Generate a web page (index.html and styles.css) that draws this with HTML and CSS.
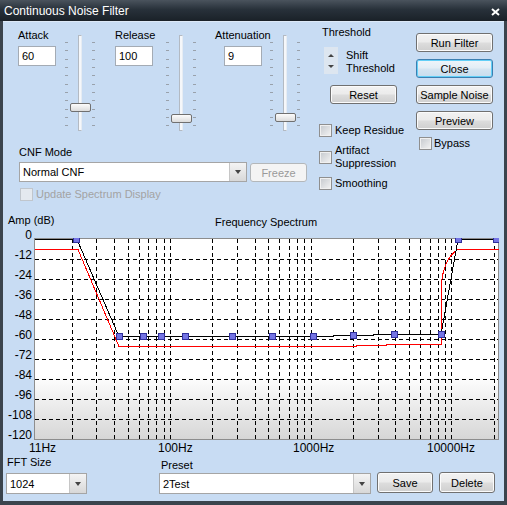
FILE: index.html
```html
<!DOCTYPE html>
<html lang="en">
<head>
  <meta charset="UTF-8">
  <title>Continuous Noise Filter</title>
  <link rel="stylesheet" href="styles.css">
</head>
<body>
  <div class="window">
    <div class="titlebar">
      <span class="title">Continuous Noise Filter</span>
      <svg class="close-x" width="9" height="8" viewBox="0 0 9 8"><path d="M1 1L8 7M8 1L1 7" stroke="#fff" stroke-width="2"/></svg>
    </div>

    <div class="client">
      <div class="top">
        <div class="left">
          <div class="sliders">
            <div class="param">
              <label>Attack</label>
              <input type="text" value="60">
            </div>
            <div class="slider">
              <span class="ticks"></span><span class="track"></span><span class="ticks"></span>
              <span class="thumb" style="top: 68px"></span>
            </div>

            <div class="param release">
              <label>Release</label>
              <input type="text" value="100">
            </div>
            <div class="slider release">
              <span class="ticks"></span><span class="track"></span><span class="ticks"></span>
              <span class="thumb" style="top: 79px"></span>
            </div>

            <div class="param atten">
              <label>Attenuation</label>
              <input type="text" value="9">
            </div>
            <div class="slider atten">
              <span class="ticks"></span><span class="track"></span><span class="ticks"></span>
              <span class="thumb" style="top: 78px"></span>
            </div>
          </div>

          <div class="mode">
            <div class="caption">CNF Mode</div>
            <div class="mode-row">
              <div class="combo combo-mode">Normal CNF<span class="drop"></span></div>
              <button class="btn freeze" disabled>Freeze</button>
            </div>
            <label class="check disabled update"><span class="box"></span>Update Spectrum Display</label>
          </div>
        </div>

        <div class="mid">
          <div class="caption">Threshold</div>
          <div class="spin-row">
            <div class="spin"><span class="up"></span><span class="down"></span></div>
            <div class="spin-text">Shift<br>Threshold</div>
          </div>
          <button class="btn reset">Reset</button>
          <label class="check keep"><span class="box"></span>Keep Residue</label>
          <label class="check artifact"><span class="box"></span>Artifact<br>Suppression</label>
          <label class="check smooth"><span class="box"></span>Smoothing</label>
        </div>

        <div class="right">
          <button class="btn">Run Filter</button>
          <button class="btn default">Close</button>
          <button class="btn">Sample Noise</button>
          <button class="btn">Preview</button>
          <label class="check bypass"><span class="box"></span>Bypass</label>
        </div>
      </div>

      <svg class="spectrum" width="501" height="244" viewBox="3 212 501 244">
        <defs>
          <linearGradient id="plot-bg" x1="0" y1="0" x2="0" y2="1">
            <stop offset="0" stop-color="#fff"/>
            <stop offset="0.68" stop-color="#fff"/>
            <stop offset="1" stop-color="#d6d6d6"/>
          </linearGradient>
          <clipPath id="plot-clip"><rect x="34" y="238" width="465" height="202"/></clipPath>
        </defs>

        <text class="small" x="8" y="224">Amp (dB)</text>
        <text class="small" x="215" y="226">Frequency Spectrum</text>

        <g text-anchor="end">
          <text x="32" y="239">0</text>
          <text x="32" y="259">-12</text>
          <text x="32" y="279">-24</text>
          <text x="32" y="299">-36</text>
          <text x="32" y="319">-48</text>
          <text x="32" y="339">-60</text>
          <text x="32" y="359">-72</text>
          <text x="32" y="379">-84</text>
          <text x="32" y="399">-96</text>
          <text x="32" y="419">-108</text>
          <text x="32" y="439">-120</text>
        </g>

        <rect x="34.5" y="238.5" width="464" height="201" fill="url(#plot-bg)" stroke="#8d8d8d"/>

        <!-- amplitude grid, every 12 dB -->
        <path class="grid" d="M35 259.5H498M35 279.5H498M35 299.5H498M35 319.5H498M35 339.5H498M35 359.5H498M35 379.5H498M35 399.5H498M35 419.5H498"/>
        <!-- log frequency grid -->
        <path class="grid" d="M72.5 239V439M96.5 239V439M114.5 239V439M128.5 239V439M139.5 239V439M148.5 239V439M156.5 239V439M164.5 239V439M170.5 239V439M212.5 239V439M237.5 239V439M255.5 239V439M268.5 239V439M279.5 239V439M289.5 239V439M297.5 239V439M304.5 239V439M311.5 239V439M353.5 239V439M378.5 239V439M395.5 239V439M409.5 239V439M420.5 239V439M430.5 239V439M438.5 239V439M445.5 239V439M451.5 239V439M494.5 239V439"/>

        <g clip-path="url(#plot-clip)" shape-rendering="crispEdges" fill="none">
          <path d="M35 249.5H78L119 346.5H356V345.5H386V344.5H441.5V287C441.5 272 447 256 458 249.5H499" stroke="#f00"/>
          <path d="M35 239.5H77L119 336.5H333V335.5H373V334.5H441L458 239.5H499" stroke="#000"/>
          <g class="nodes">
            <rect x="73.5" y="236.5" width="6" height="6"/>
            <rect x="116.5" y="333.5" width="6" height="6"/>
            <rect x="140.5" y="333.5" width="6" height="6"/>
            <rect x="158.5" y="333.5" width="6" height="6"/>
            <rect x="182.5" y="333.5" width="6" height="6"/>
            <rect x="229.5" y="333.5" width="6" height="6"/>
            <rect x="269.5" y="333.5" width="6" height="6"/>
            <rect x="310.5" y="333.5" width="6" height="6"/>
            <rect x="350.5" y="332.5" width="6" height="6"/>
            <rect x="391.5" y="331.5" width="6" height="6"/>
            <rect x="438.5" y="331.5" width="6" height="6"/>
            <rect x="455.5" y="236.5" width="6" height="6"/>
            <rect x="493.5" y="236.5" width="6" height="6"/>
          </g>
        </g>

        <text x="29" y="452">11Hz</text>
        <text x="158" y="452">100Hz</text>
        <text x="293" y="452">1000Hz</text>
        <text x="427" y="452">10000Hz</text>
      </svg>

      <div class="bottom">
        <div class="fft">
          <div class="caption">FFT Size</div>
          <div class="combo">1024<span class="drop"></span></div>
        </div>
        <div class="preset">
          <div class="caption">Preset</div>
          <div class="combo">2Test<span class="drop"></span></div>
        </div>
        <button class="btn">Save</button>
        <button class="btn">Delete</button>
      </div>
    </div>
  </div>
</body>
</html>
```

FILE: styles.css
```css
* {
  box-sizing: border-box;
}
body {
  margin: 0;
  background-color: #3b444d;
  color: #000;
  font-family: "Liberation Sans", Arial, sans-serif;
  font-size: 11px;
}
.window {
  width: 507px;
  height: 505px;
  display: flex;
  flex-direction: column;
  background-color: #3b444d;
  overflow: hidden;
}
.titlebar {
  height: 21px;
  flex: none;
  display: flex;
  justify-content: space-between;
  align-items: flex-start;
  padding: 0 7px 0 4px;
  background: linear-gradient(#4a535d, #28313a 45%, #1a2128);
  color: #fff;
}
.title {
  font-size: 12px;
  line-height: 19px;
  padding-top: 2px;
}
.close-x {
  margin-top: 8px;
}
.client {
  flex: 1;
  margin: 0 3px 4px;
  background-color: #c8dcf3;
  box-shadow: inset 0 1px #dde9f7;
  display: flex;
  flex-direction: column;
}
.caption {
  line-height: 13px;
  white-space: nowrap;
}

/* top area */
.top {
  height: 191px;
  flex: none;
  display: flex;
}
.left {
  width: 310px;
  flex: none;
}
.sliders {
  display: flex;
  align-items: flex-start;
  padding-left: 15px;
}
.param {
  flex: none;
  width: 38px;
  margin-top: 8px;
}
.param label {
  display: block;
  line-height: 13px;
  white-space: nowrap;
}
.param input {
  display: block;
  width: 38px;
  height: 20px;
  margin-top: 4px;
  padding: 0 3px;
  border: 1px solid #a4abb4;
  background: #fff;
  color: #000;
  font: inherit;
}
.param.release {
  margin-left: 17px;
}
.param.atten {
  width: 51px;
  margin-left: 16px;
}
.param.atten input {
  margin-left: 9px;
}
.slider {
  position: relative;
  flex: none;
  width: 34px;
  height: 96px;
  margin: 14px 0 0 8px;
  display: flex;
}
.slider.release {
  margin-left: 12px;
}
.slider.atten {
  margin-left: 3px;
}
.ticks {
  width: 3px;
  height: 85px;
  margin-top: 7px;
  background: repeating-linear-gradient(#99a1ab 0 1px, transparent 1px 8.33px);
}
.ticks:first-child {
  margin-left: 1px;
}
.track {
  width: 4px;
  height: 96px;
  margin: 0 10px;
  border: 1px solid #b3bac3;
  border-right-color: #e6ecf3;
  background: #f5f7fa;
}
.thumb {
  position: absolute;
  left: 6px;
  width: 21px;
  height: 9px;
  border: 1px solid #707070;
  border-radius: 2px;
  background: linear-gradient(#fcfcfc, #dcdcdc);
}

.mode {
  margin-top: 15px;
  padding-left: 16px;
}
.mode-row {
  display: flex;
  align-items: flex-start;
  margin-top: 3px;
}
.combo {
  display: flex;
  align-items: center;
  height: 20px;
  padding-left: 3px;
  border: 1px solid #a5a5a5;
  background: #fff;
  white-space: nowrap;
}
.combo .drop {
  margin-left: auto;
  align-self: stretch;
  width: 17px;
  display: flex;
  align-items: center;
  justify-content: center;
  background: linear-gradient(#f4f4f4, #d8d8d8);
  border-left: 1px solid #c6c6c6;
}
.combo .drop::after {
  content: "";
  border-left: 3px solid transparent;
  border-right: 3px solid transparent;
  border-top: 4px solid #444;
}
.combo-mode {
  width: 228px;
}
.freeze {
  width: 57px;
  margin: 1px 0 0 3px;
}
.update {
  margin: 6px 0 0 1px;
}

/* buttons */
.btn {
  display: block;
  height: 19px;
  padding: 0;
  border: 1px solid #707070;
  border-radius: 3px;
  background: linear-gradient(#f2f2f2, #ebebeb 48%, #dddddd 52%, #cfcfcf);
  box-shadow: inset 0 0 0 1px #fbfbfb;
  color: #000;
  font: inherit;
  text-align: center;
}
.btn.default {
  border-color: #3c7fb1;
  box-shadow: inset 0 0 0 1px #62cff7;
  background: linear-gradient(#eef5fa, #e2edf5 48%, #d5e5f1 52%, #c8ddee);
}
.btn:disabled {
  color: #9a9a9a;
  border-color: #b3b7ba;
  background: #f4f4f4;
  box-shadow: none;
}

/* checkboxes */
.check {
  display: flex;
  align-items: center;
  gap: 3px;
  line-height: 13px;
  white-space: nowrap;
}
.box {
  flex: none;
  width: 13px;
  height: 13px;
  border: 1px solid #8f8f8f;
  background: linear-gradient(135deg, #c4c8cd, #f4f4f4);
  box-shadow: inset 0 0 0 1px #f0f0f0;
}
.check.disabled {
  color: #a3a3a3;
}
.check.disabled .box {
  border-color: #c0c6cd;
  background: #e4e9ef;
  box-shadow: none;
}

.mid {
  width: 103px;
  flex: none;
}
.mid .caption {
  margin: 5px 0 0 9px;
}
.spin-row {
  display: flex;
  margin-top: 8px;
  padding-left: 11px;
}
.spin {
  width: 14px;
  height: 27px;
  display: flex;
  flex-direction: column;
  background: #dde6f0;
}
.spin span {
  flex: 1;
  display: flex;
  justify-content: center;
}
.spin .up {
  align-items: flex-end;
  padding-bottom: 2px;
}
.spin .down {
  align-items: flex-start;
  padding-top: 6px;
}
.spin .up::after {
  content: "";
  border-left: 3px solid transparent;
  border-right: 3px solid transparent;
  border-bottom: 3px solid #444;
}
.spin .down::after {
  content: "";
  border-left: 3px solid transparent;
  border-right: 3px solid transparent;
  border-top: 3px solid #444;
}
.spin-text {
  margin: 2px 0 0 8px;
  line-height: 13px;
}
.reset {
  width: 67px;
  margin: 10px 0 0 17px;
}
.mid .check {
  margin-left: 6px;
}
.keep {
  margin-top: 20px;
}
.artifact,
.smooth {
  margin-top: 7px;
}

.right {
  width: 77px;
  flex: none;
  padding-top: 12px;
}
.right .btn {
  width: 77px;
  margin-bottom: 7px;
}
.bypass {
  margin: 1px 0 0 3px;
  gap: 2px;
}

/* spectrum */
.spectrum {
  display: block;
  flex: none;
}
.spectrum text {
  font-family: "Liberation Sans", Arial, sans-serif;
  font-size: 12px;
  fill: #000;
}
.spectrum text.small {
  font-size: 11px;
}
.grid {
  fill: none;
  stroke: #000;
  stroke-dasharray: 4 3;
  shape-rendering: crispEdges;
}
.nodes rect {
  fill: #7474e4;
  stroke: #30309c;
}

/* bottom row */
.bottom {
  flex: 1;
  display: flex;
  align-items: flex-start;
}
.fft {
  width: 81px;
  margin-left: 3px;
}
.fft .caption {
  padding-left: 1px;
}
.fft .combo {
  height: 21px;
  margin-top: 4px;
}
.preset {
  width: 212px;
  margin-left: 72px;
}
.preset .caption {
  margin-top: 3px;
  padding-left: 2px;
}
.preset .combo {
  height: 21px;
  margin-top: 1px;
}
.bottom .btn {
  width: 56px;
  height: 21px;
  margin: 16px 0 0 6px;
}
```
